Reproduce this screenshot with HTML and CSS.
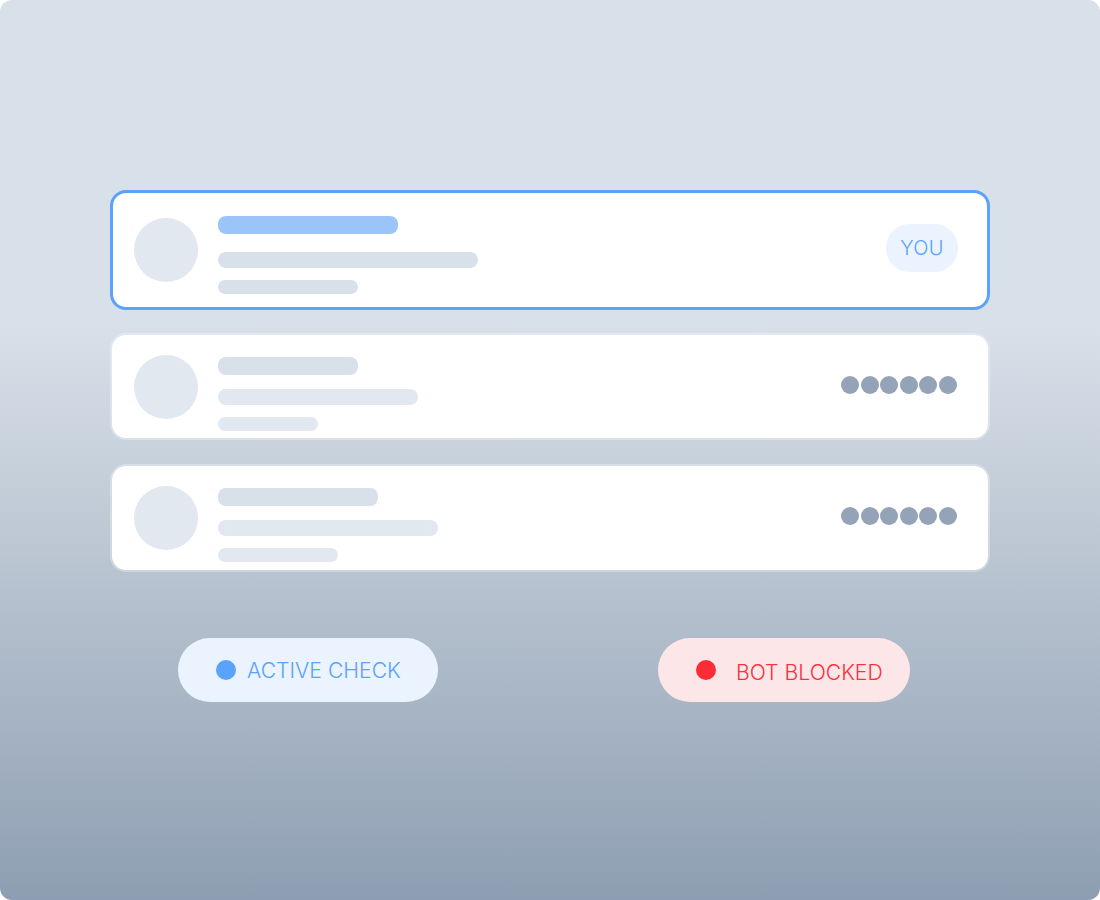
FILE: index.html
```html
<!DOCTYPE html>
<html>
<head>
<meta charset="utf-8">
<link rel="stylesheet" href="styles.css">
</head>
<body>
<div class="stage">
  <div class="list">
    <div class="card card-you">
      <div class="avatar"></div>
      <div class="lines lines-you">
        <div class="bar bar-blue w180 h18"></div>
        <div class="bar bar-mid w260 h16"></div>
        <div class="bar bar-mid w140 h14"></div>
      </div>
      <div class="you">YOU</div>
    </div>
    <div class="card card-other c2">
      <div class="avatar"></div>
      <div class="lines">
        <div class="bar bar-mid w140 h18"></div>
        <div class="bar bar-light w200 h16"></div>
        <div class="bar bar-light w100 h14"></div>
      </div>
      <div class="dots"><span></span><span></span><span></span><span></span><span></span><span></span></div>
    </div>
    <div class="card card-other c3">
      <div class="avatar"></div>
      <div class="lines">
        <div class="bar bar-mid w160 h18"></div>
        <div class="bar bar-light w220 h16"></div>
        <div class="bar bar-light w120 h14"></div>
      </div>
      <div class="dots"><span></span><span></span><span></span><span></span><span></span><span></span></div>
    </div>
  </div>
  <div class="badges">
    <div class="pill pill-active"><span class="dot"></span><span class="label">ACTIVE CHECK</span></div>
    <div class="pill pill-blocked"><span class="dot"></span><span class="label">BOT BLOCKED</span></div>
  </div>
</div>
</body>
</html>
```
FILE: styles.css
```css
* { box-sizing: border-box; }
html, body { margin: 0; padding: 0; background: #ffffff; }
body { font-family: "Inter", "Liberation Sans", sans-serif; }

.stage {
  width: 1100px;
  height: 900px;
  border-radius: 12px;
  overflow: hidden;
  background: linear-gradient(180deg, #d8e0e9 0%, #d8e0e9 36%, #c6d0db 52%, #b3bfcc 68%, #a1afc0 84%, #8e9eb2 100%);
  padding: 190px 110px 0 110px;
}

.list { display: flex; flex-direction: column; }

.card {
  display: flex;
  align-items: center;
  background: #ffffff;
  background-clip: padding-box;
  border-radius: 16px;
  padding: 0 31px 0 22px;
}
.card-you {
  height: 120px;
  border: 3px solid #5aa2fa;
  padding-left: 21px;
  padding-right: 29px;
}
.card-other { border: 2px solid rgba(255, 255, 255, 0.3); }
.c2 { height: 107px; margin-top: 23px; }
.c3 { height: 108px; margin-top: 24px; }

.avatar {
  width: 64px;
  height: 64px;
  border-radius: 50%;
  background: #e2e8f0;
  flex: none;
}

.lines {
  display: flex;
  flex-direction: column;
  gap: 14px;
  margin-left: 20px;
  margin-top: 14px;
  flex: 1;
}
.lines-you { margin-top: 10px; }
.lines-you .bar + .bar { margin-top: 4px; }
.lines-you .bar + .bar + .bar { margin-top: -2px; }
.lines .bar + .bar + .bar { margin-top: -2px; }

.bar { border-radius: 8px; }
.bar-blue { background: #9bc5f9; }
.bar-mid { background: #d8e0e9; }
.bar-light { background: #e2e8f0; }
.w100 { width: 100px; } .w120 { width: 120px; } .w140 { width: 140px; }
.w160 { width: 160px; } .w180 { width: 180px; } .w200 { width: 200px; }
.w220 { width: 220px; } .w260 { width: 260px; }
.h18 { height: 18px; } .h16 { height: 16px; } .h14 { height: 14px; }

.you {
  width: 72px;
  height: 48px;
  border-radius: 24px;
  background: #eaf3fe;
  color: #5aa2fa;
  font-size: 20px;
  font-weight: 300;
  display: flex;
  align-items: center;
  justify-content: center;
  letter-spacing: 0.3px;
  margin-top: -4px;
}

.dots { display: flex; gap: 1.6px; margin-top: -4px; }
.dots span {
  width: 18px;
  height: 18px;
  border-radius: 50%;
  background: #94a3b8;
}

.badges {
  display: flex;
  margin-top: 66px;
  padding-left: 68px;
  gap: 220px;
}
.pill {
  height: 64px;
  border-radius: 32px;
  display: flex;
  align-items: center;
  font-size: 21.2px;
  font-weight: 300;
  padding-left: 38px;
}
.pill .dot { width: 20px; height: 20px; border-radius: 50%; flex: none; }
.pill-active { width: 260px; background: #eaf3fe; color: #5aa2fa; }
.pill-active .dot { background: #5aa2fa; margin-right: 11px; }
.pill-blocked { width: 252px; background: #fde6e8; color: #f7323e; }
.pill-blocked .dot { background: #fb2c36; margin-right: 20px; }
.pill-blocked .label { margin-top: 3px; }
```
